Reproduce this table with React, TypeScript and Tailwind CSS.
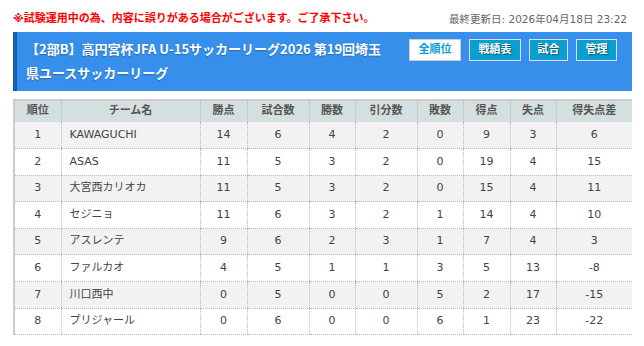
import React from "react";

const rows: (string | number)[][] = [
  [1, "KAWAGUCHI", 14, 6, 4, 2, 0, 9, 3, 6],
  [2, "ASAS", 11, 5, 3, 2, 0, 19, 4, 15],
  [3, "大宮西カリオカ", 11, 5, 3, 2, 0, 15, 4, 11],
  [4, "セジニョ", 11, 6, 3, 2, 1, 14, 4, 10],
  [5, "アスレンテ", 9, 6, 2, 3, 1, 7, 4, 3],
  [6, "ファルカオ", 4, 5, 1, 1, 3, 5, 13, -8],
  [7, "川口西中", 0, 5, 0, 0, 5, 2, 17, -15],
  [8, "プリジャール", 0, 6, 0, 0, 6, 1, 23, -22],
];

const heads = ["順位", "チーム名", "勝点", "試合数", "勝数", "引分数", "敗数", "得点", "失点", "得失点差"];
const widths = ["w-[46px]", "w-[139px]", "w-[47px]", "w-[62px]", "w-[46px]", "w-[62px]", "w-[46px]", "w-[47px]", "w-[46px]", "w-[76px]"];

export default function App() {
  return (
    <div
      className="w-[644px] h-[346px] bg-white text-[#333]"
      style={{ fontFamily: '"DejaVu Sans", "Noto Sans CJK JP", sans-serif' }}
    >
      <div className="flex items-end justify-between pl-[13px] pr-[17px] pt-[11px] h-[32px] pb-[5px]">
        <span className="text-[11px] font-bold text-[#ff0000] leading-[16px]">
          ※試験運用中の為、内容に誤りがある場合がございます。ご了承下さい。
        </span>
        <span className="text-[10.5px] text-[#666] leading-[16px]">最終更新日: 2026年04月18日 23:22</span>
      </div>
      <div className="mx-[13px] w-[619px] h-[59px] bg-[#368fea] border-l-[4px] border-[#1560b0] flex justify-between pl-[9px] pr-[15px] pt-[5px]">
        <div
          className="text-white font-bold text-[13px] leading-[24px] whitespace-nowrap"
          style={{ textShadow: "0 1px 1px rgba(0,0,0,0.25)", fontFamily: '"Noto Sans CJK JP", sans-serif' }}
        >
          【2部B】高円宮杯JFA U-15サッカーリーグ2026 第19回埼玉
          <br />
          県ユースサッカーリーグ
        </div>
        <div className="flex gap-[8px] pt-[2px] items-start">
          <div className="h-[22px] w-[52px] bg-white border border-[#ccc] text-[#0a9fd0] font-bold text-[11px] flex items-center justify-center">
            全順位
          </div>
          {["戦績表", "試合", "管理"].map((t, i) => (
            <div
              key={t}
              className={`h-[22px] ${i === 0 ? "w-[52px]" : i === 1 ? "w-[39px]" : "w-[41px]"} bg-[#0a9fd0] border border-[#dde] text-white font-bold text-[11px] flex items-center justify-center`}
              style={{ textShadow: "1px 1px 1px rgba(0,0,0,0.5)" }}
            >
              {t}
            </div>
          ))}
        </div>
      </div>
      <div className="mx-[13px] mt-[8px] w-[619px] border-2 border-[#ccc] border-b-0 border-r-[2px]">
        <table className="w-[615px] border-collapse text-[11px] table-fixed">
          <thead>
            <tr className="bg-[#d4e0e0] h-[21px]">
              {heads.map((h, i) => (
                <th
                  key={h}
                  className={`${widths[i]} font-bold text-[#555] border-l border-dotted border-[#bbb] first:border-l-0 text-center`}
                >
                  {h}
                </th>
              ))}
            </tr>
          </thead>
          <tbody>
            {rows.map((r, ri) => (
              <tr key={ri} className={`${ri % 2 === 0 ? "bg-[#f2f2f2]" : "bg-white"} h-[26.6px]`}>
                {r.map((c, ci) => (
                  <td
                    key={ci}
                    className={`border-b border-l border-dotted border-[#bbb] first:border-l-0 text-[#444] ${
                      ci === 1 ? "text-left pl-[8px]" : "text-center"
                    }`}
                  >
                    {c}
                  </td>
                ))}
              </tr>
            ))}
          </tbody>
        </table>
      </div>
    </div>
  );
}
